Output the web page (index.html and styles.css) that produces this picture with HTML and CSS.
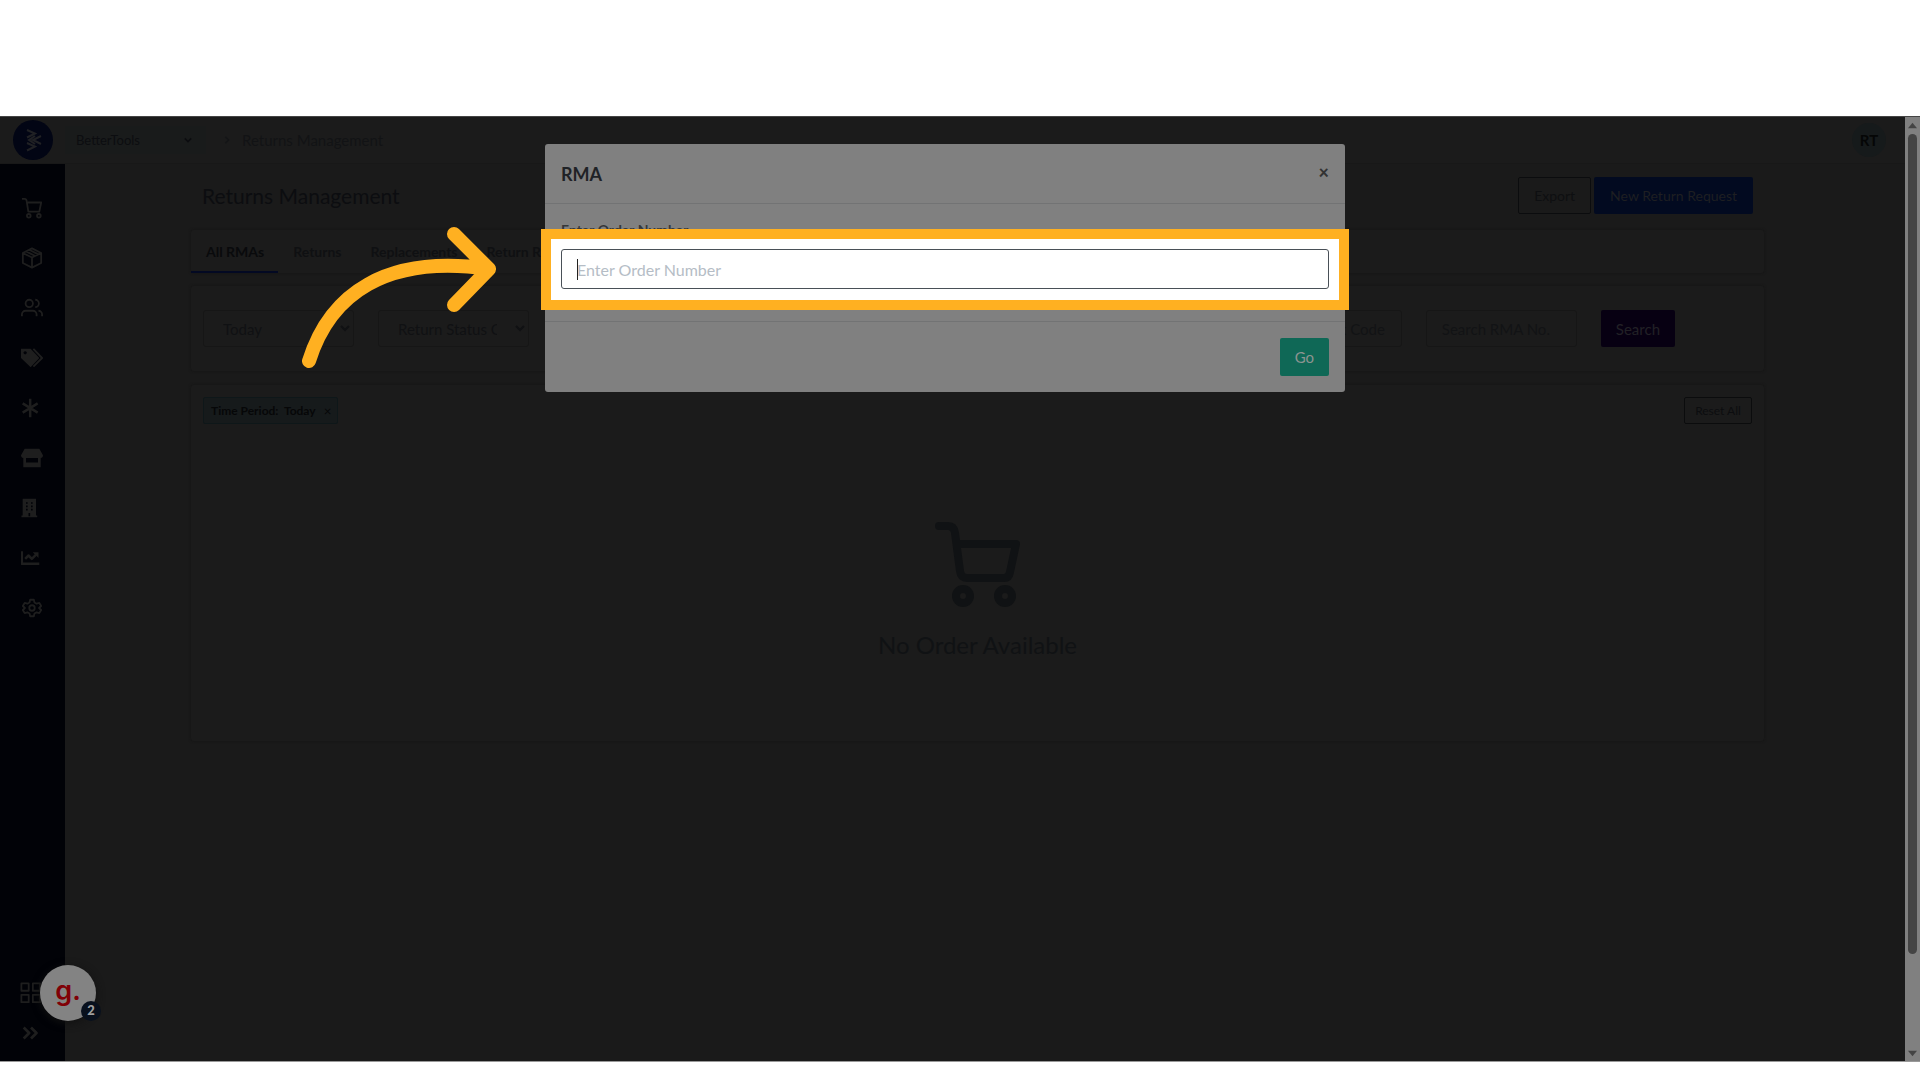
FILE: index.html
```html
<!DOCTYPE html>
<html lang="en">
<head>
    <meta charset="UTF-8">
    <meta name="viewport" content="width=device-width, initial-scale=1.0">
    <title>Returns Management</title>
    <link rel="stylesheet" href="styles.css">
</head>
<body>
<div class="screen">

    <!-- Top Bar -->
    <header class="topbar">
        <a href="#" class="logo" aria-label="Home">
            <svg viewBox="0 0 40 40" width="40" height="40" fill="none" stroke="#202124" stroke-width="2">
                <path d="M14 10l8 3.500-8 4M28 16l-8 4 8 4M22 16l-6 4 6 4M14 23l8 3.500-8 4"/>
            </svg>
        </a>
        <button class="company">BetterTools
            <svg viewBox="0 0 10 10" width="8" height="8" fill="none" stroke="currentColor" stroke-width="2"><path d="M1 3l4 4 4-4"/></svg>
        </button>
        <svg class="crumb-arrow" viewBox="0 0 10 10" width="8" height="8" fill="none" stroke="currentColor" stroke-width="2"><path d="M3 1l4 4-4 4"/></svg>
        <a href="#" class="crumb">Returns Management</a>
        <button class="avatar">RT</button>
    </header>

    <div class="layout">
        <!-- Side Menu -->
        <nav class="sidebar">
            <a href="#" aria-label="Orders"><svg viewBox="0 0 24 24"><path d="M1 2h3c1.500 0 2 1 2.200 2.500L8 16h12l2-10H6.500"/><circle cx="8.500" cy="20.500" r="2"/><circle cx="19.500" cy="20.500" r="2"/></svg></a>
            <a href="#" aria-label="Products"><svg viewBox="0 0 24 24"><path d="M12 1.500l10 5v11l-10 5-10-5v-11zM2 6.500l10 5 10-5M12 11.500v11M5.500 4.800l10 5M9 3l10 5"/></svg></a>
            <a href="#" aria-label="Customers"><svg viewBox="0 0 24 24"><circle cx="9" cy="7" r="4"/><path d="M1 21v-2a4 4 0 0 1 4-4h8a4 4 0 0 1 4 4v2M15.500 3a4 4 0 0 1 0 8M19 15a4 4 0 0 1 4 4v2"/></svg></a>
            <a href="#" aria-label="Offers"><svg viewBox="0 0 24 24"><path class="solid" fill-rule="evenodd" d="M0 2h10.500l9.500 10-9.500 10L0 12zM4.500 4.500a1.800 1.800 0 1 0 .1 0z"/><path d="M13.500 2l9.500 10-9.500 9.500"/></svg></a>
            <a href="#" aria-label="Channels"><svg class="shift" viewBox="0 0 24 24"><path class="heavy" d="M11 1v22M2 6.500l18 11M20 6.500l-18 11"/></svg></a>
            <a href="#" aria-label="Store"><svg viewBox="0 0 24 24"><path class="solid" d="M4 2h16l4 7c0 1.500-1 3-2.500 3v10h-19V12C1 12 0 10.500 0 9zM5.500 12v5h13v-5z" fill-rule="evenodd"/></svg></a>
            <a href="#" aria-label="Warehouse"><svg class="shift" viewBox="0 0 24 24"><path class="solid" fill-rule="evenodd" d="M2 1h16v20h1.500v2h-19v-2H2zM6 5v2h2V5zM12 5v2h2V5zM6 9v2h2V9zM12 9v2h2V9zM6 13v2h2v-2zM12 13v2h2v-2zM9 18v4h2v-4z"/></svg></a>
            <a href="#" aria-label="Reports"><svg class="shift" viewBox="0 0 24 24"><path class="heavy" d="M1 4v15h21"/><path class="heavy" d="M5 13l4-4 4 4 6-6"/><path class="solid" d="M14 5h7v7z"/></svg></a>
            <a href="#" aria-label="Settings"><svg viewBox="0 0 24 24"><path d="M10 3h4l.7 3 2.300 1.300 3-.9 2 3.400L19.700 12l2.300 2.200-2 3.400-3-.9-2.300 1.300-.7 3h-4l-.7-3L7 16.700l-3 .9-2-3.400L4.300 12 2 9.800l2-3.400 3 .9L9.300 6z"/><circle cx="12" cy="12" r="3"/></svg></a>
            <div class="sidebar-bottom">
                <a href="#" aria-label="Apps"><svg viewBox="0 0 24 24"><path d="M1.500 1.500h8v8h-8zM14 1.500h8v8h-8zM1.500 14h8v8h-8zM14 14h8v8h-8z"/></svg></a>
                <a href="#" aria-label="Expand menu"><svg viewBox="0 0 24 24"><path class="heavy" d="M4 6l6 6-6 6M12 6l6 6-6 6"/></svg></a>
            </div>
        </nav>

        <!-- Page Content -->
        <main>
            <div class="page-head">
                <h1>Returns Management</h1>
                <button class="btn btn-outline">Export</button>
                <button class="btn btn-blue">New Return Request</button>
            </div>

            <div class="card tabs">
                <a href="#" class="active">All RMAs</a>
                <a href="#">Returns</a>
                <a href="#">Replacements</a>
                <a href="#">Return Requests</a>
            </div>

            <form class="card filters">
                <div class="select-box">
                    <select aria-label="Time period"><option>Today</option></select>
                </div>
                <div class="select-box">
                    <select aria-label="Return status"><option>Return Status C</option></select>
                </div>
                <input class="push" type="text" placeholder="Search Rack Code" aria-label="Rack code">
                <input type="text" placeholder="Search RMA No." aria-label="RMA number">
                <button type="button" class="btn btn-purple">Search</button>
            </form>

            <div class="card results">
                <div class="results-head">
                    <span class="chip">Time Period:&nbsp; Today <button aria-label="Remove filter">×</button></span>
                    <button class="reset">Reset All</button>
                </div>
                <div class="empty">
                    <svg viewBox="0 0 86 86" width="86" height="86" fill="none" stroke="currentColor" stroke-width="8" stroke-linecap="round" stroke-linejoin="round">
                        <path d="M4 4h9q6 0 7 7l5 38q1 7 7 7h37q5 0 6-6l6-28H23"/>
                        <circle cx="28" cy="74" r="7"/><circle cx="70" cy="74" r="7"/>
                    </svg>
                    <p>No Order Available</p>
                </div>
            </div>
        </main>
    </div>

    <!-- Scroll Bar -->
    <div class="scrollbar">
        <svg viewBox="0 0 10 6" width="9" height="7"><path d="M5 0l5 6H0z"/></svg>
        <div class="track"><div class="thumb"></div></div>
        <svg viewBox="0 0 10 6" width="9" height="7"><path d="M0 0h10L5 6z"/></svg>
    </div>

    <!-- RMA Dialog -->
    <div class="overlay">
        <div class="modal" role="dialog" aria-labelledby="modal-title">
            <div class="modal-head">
                <h2 id="modal-title">RMA</h2>
                <button class="close" aria-label="Close">×</button>
            </div>
            <div class="modal-body">
                <label for="order-number">Enter Order Number</label>
                <div class="field">
                    <div class="highlight"></div>
                    <input type="text" id="order-number" placeholder="Enter Order Number">
                    <span class="caret"></span>
                </div>
            </div>
            <div class="modal-foot">
                <button class="btn btn-green">Go</button>
            </div>
        </div>
    </div>

    <!-- Pointer Arrow -->
    <svg class="pointer" viewBox="0 0 194 152" width="194" height="152" fill="none" stroke="#ffb021" stroke-width="14" stroke-linecap="round" stroke-linejoin="round">
        <path d="M7 137C28 70 84 30 187 45M152 10l35 35-35 36"/>
    </svg>

    <!-- Help Widget -->
    <button class="widget"><span class="g">g.</span><span class="count">2</span></button>
</div>
</body>
</html>
```

FILE: styles.css
```css
* {
    box-sizing: border-box;
    margin: 0;
    padding: 0;
    font-family: Lato, "Liberation Sans", sans-serif;
}

body {
    background: #fff;
    height: 100vh;
    padding: 116px 0 18px;
    color: #0c0d10;
    font-size: 14px;
}

a {
    text-decoration: none;
    color: inherit;
}

button {
    border: none;
    background: none;
    color: inherit;
    cursor: pointer;
}

.screen {
    position: relative;
    height: 100%;
    background: #1a1a1a;
    border-top: 1px solid #444;
    border-bottom: 1px solid #999;
    display: grid;
    grid-template-columns: 1fr 15px;
    grid-template-rows: 47px 1fr;
}

/* Top Bar */
.topbar {
    display: flex;
    align-items: center;
    padding: 0 19px 0 13px;
    background: #1b1b1b;
    border-bottom: 1px solid #181818;
}

.logo {
    width: 40px;
    height: 40px;
    border-radius: 50%;
    background: #020514;
}

.company {
    display: flex;
    align-items: center;
    justify-content: space-between;
    width: 141px;
    height: 28px;
    margin-left: 12px;
    padding: 0 14px 0 11px;
    background: #191b1b;
    font-size: 13px;
}

.crumb-arrow {
    margin: 0 11px 0 17px;
    color: #141517;
}

.crumb {
    color: #121315;
    font-size: 15px;
}

.avatar {
    width: 34px;
    height: 34px;
    margin-left: auto;
    border-radius: 50%;
    background: #161a1b;
    color: #050606;
    font-size: 15px;
    font-weight: bold;
}

/* Side Menu */
.layout {
    grid-row: 2;
    display: flex;
    min-height: 0;
}

.sidebar {
    width: 65px;
    background: #010207;
    display: flex;
    flex-direction: column;
    padding: 19px 0 8px;
}

.sidebar a {
    display: flex;
    align-items: center;
    height: 50px;
    padding-left: 21px;
}

.sidebar svg {
    width: 22px;
    height: 22px;
    fill: none;
    stroke: #1e1e1e;
    stroke-width: 2;
    stroke-linejoin: round;
}

.sidebar .shift {
    width: 20px;
}

.sidebar .solid {
    fill: #1e1e1e;
    stroke: none;
}

.sidebar .heavy {
    stroke-width: 3;
}

.sidebar-bottom {
    margin-top: auto;
}

.sidebar-bottom a {
    height: 40px;
    padding-left: 20px;
}

/* Page Content */
main {
    flex: 1;
    padding: 13px 141px 0 126px;
}

.page-head {
    display: flex;
    align-items: center;
    gap: 3px;
    padding: 0 11px 0 11px;
}

.page-head h1 {
    flex: 1;
    font-size: 21px;
    font-weight: normal;
}

.btn {
    height: 37px;
    padding: 0 15px;
    border-radius: 2px;
    font-size: 15px;
}

.page-head .btn {
    padding: 0 16px;
    font-size: 14px;
}

.page-head .btn-outline {
    padding: 0 15px;
    border: 1px solid #0b0c0e;
    color: #0e0f11;
}

.btn-blue {
    background: #020a20;
    color: #1e1f22;
}

.btn-purple {
    background: #070012;
    color: #222126;
}

.modal .btn-green {
    height: 38px;
    background: #0f6856;
    color: #8b9491;
}

.card {
    background: #1b1b1b;
    border-radius: 3px;
    box-shadow: 0 0 3px #141414;
}

.tabs {
    display: flex;
    height: 43px;
    margin-top: 16px;
    color: #0f1012;
    font-weight: bold;
}

.tabs a {
    display: flex;
    align-items: center;
    padding: 2px 14px 0 15px;
    border-bottom: 2px solid transparent;
}

.tabs .active {
    color: #090a0c;
    border-bottom-color: #030923;
}

.filters {
    display: flex;
    align-items: center;
    gap: 24px;
    height: 85px;
    margin-top: 13px;
    padding: 0 89px 0 12px;
}

.filters .push {
    margin-left: auto;
}

.filters input,
.filters select {
    width: 151px;
    height: 37px;
    padding: 0 15px;
    border: 1px solid #161616;
    border-radius: 3px;
    background: transparent;
    color: #101113;
    font-size: 15px;
}

.filters input::placeholder {
    color: #121315;
}

.results {
    height: 356px;
    margin-top: 14px;
    padding: 12px 12px 0;
}

.results-head {
    display: flex;
    justify-content: space-between;
}

.chip {
    display: flex;
    align-items: center;
    gap: 8px;
    height: 27px;
    padding: 0 6px 0 7px;
    border: 1px solid #0e1719;
    border-radius: 2px;
    background: #161a1b;
    color: #060708;
    font-size: 12px;
    font-weight: bold;
}

.reset {
    width: 68px;
    border: 1px solid #0b0c0d;
    border-radius: 2px;
    color: #0c0d0f;
    font-size: 12px;
}

.empty {
    display: flex;
    flex-direction: column;
    align-items: center;
    gap: 22px;
    padding-top: 98px;
    color: #101214;
}

.empty p {
    font-size: 24px;
}

/* Scroll Bar */
.scrollbar {
    grid-column: 2;
    grid-row: 1 / 3;
    display: flex;
    flex-direction: column;
    align-items: center;
    padding: 5px 0 4px;
    gap: 5px;
    background: #808080;
    fill: #444;
}

.track {
    flex: 1;
}

.thumb {
    width: 9px;
    height: 90%;
    border-radius: 5px;
    background: #444;
}

/* RMA Dialog */
.overlay {
    position: absolute;
    inset: 0 30px auto 0;
    display: flex;
    justify-content: center;
    padding-top: 27px;
}

.modal {
    width: 800px;
    border-radius: 3px;
    background: #808080;
    color: #1f2226;
}

.modal-head {
    display: flex;
    align-items: center;
    justify-content: space-between;
    height: 60px;
    padding: 0 16px;
    border-bottom: 1px solid #727374;
}

.modal-head h2 {
    font-size: 18px;
}

.close {
    padding-bottom: 4px;
    color: #333;
    font-size: 18px;
    font-weight: 900;
}

.modal-body {
    padding: 16px 16px 32px;
}

.modal-body label {
    display: block;
    height: 29px;
    line-height: 20px;
    color: #34373a;
    font-weight: bold;
}

.field {
    position: relative;
}

.highlight {
    position: absolute;
    inset: -20px -20px -21px;
    border: 10px solid #ffb021;
    background: #fff;
}

.field input {
    position: relative;
    display: block;
    width: 100%;
    height: 40px;
    padding: 0 15px;
    border: 1px solid #495057;
    border-radius: 3px;
    background: #fff;
    font-size: 16px;
}

.field input::placeholder {
    color: #b5bdc6;
}

.caret {
    position: absolute;
    top: 10px;
    left: 16px;
    width: 1px;
    height: 21px;
    background: #222;
}

.modal-foot {
    display: flex;
    justify-content: flex-end;
    padding: 16px;
    border-top: 1px solid #727374;
}

/* Pointer Arrow */
.pointer {
    position: absolute;
    top: 107px;
    left: 302px;
}

/* Help Widget */
.widget {
    position: absolute;
    left: 40px;
    bottom: 40px;
    width: 56px;
    height: 56px;
    border-radius: 50%;
    background: #838383;
    box-shadow: 0 2px 8px #111;
}

.widget .g {
    display: block;
    margin-top: -6px;
    color: #800006;
    font-family: Inter, sans-serif;
    font-size: 27px;
    font-weight: 600;
}

.widget .count {
    position: absolute;
    right: -5px;
    bottom: 0;
    width: 20px;
    height: 20px;
    border-radius: 50%;
    background: #08101d;
    color: #a0a0a0;
    font-size: 13px;
    font-weight: 900;
    line-height: 18px;
}
```
